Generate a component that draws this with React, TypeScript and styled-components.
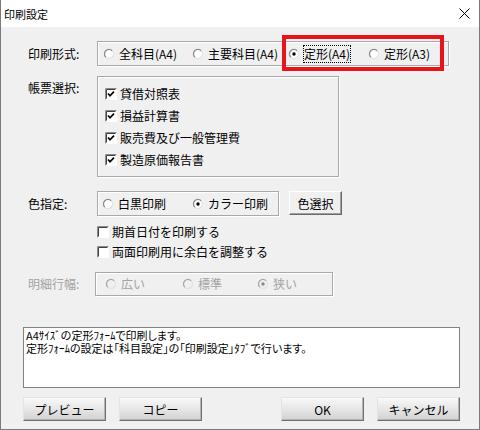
import React from "react";
import styled, { createGlobalStyle } from "styled-components";

const Global = createGlobalStyle`
  html, body { margin: 0; padding: 0; background: #f0f0f0; }
  * { box-sizing: border-box; }
`;

const FONT = `"Noto Sans CJK JP", "Noto Sans", "Liberation Sans", sans-serif`;

const Window = styled.div`
  width: 480px;
  height: 430px;
  background: #f0f0f0;
  border: 1px solid #7a7a7a;
  border-top: none;
  display: flex;
  flex-direction: column;
  font-family: ${FONT};
  font-size: 12px;
  color: #000;
  overflow: hidden;
`;

const TitleBar = styled.div`
  height: 27px;
  background: #fff;
  display: flex;
  align-items: center;
  justify-content: space-between;
  padding: 0 9px 0 3px;
  font-size: 11px;
  flex-shrink: 0;
`;

const Body = styled.div`
  padding: 0 19px 0 22px;
  display: flex;
  flex-direction: column;
`;

const Row = styled.div<{ $mt: number }>`
  display: grid;
  grid-template-columns: 74px auto;
  align-items: start;
  margin-top: ${(p) => p.$mt}px;
`;

const Label = styled.div<{ $h: number; $disabled?: boolean; $pt?: number }>`
  padding-left: 5px;
  height: ${(p) => p.$h}px;
  display: flex;
  align-items: ${(p) => (p.$pt !== undefined ? "flex-start" : "center")};
  padding-top: ${(p) => p.$pt ?? 0}px;
  line-height: 16px;
  color: ${(p) => (p.$disabled ? "#a3a3a3" : "#000")};
`;

const Group = styled.div<{ $w: number; $h: number; $pl: number; $ml?: number }>`
  position: relative;
  width: ${(p) => p.$w}px;
  height: ${(p) => p.$h}px;
  margin-left: ${(p) => p.$ml ?? 0}px;
  border: 1px solid #a9a9a9;
  box-shadow: inset 1px 1px 0 #fff, 1px 1px 0 #fff;
  display: flex;
  align-items: center;
  padding-left: ${(p) => p.$pl}px;
`;

const CheckGroup = styled.div`
  width: 242px;
  height: 101px;
  border: 1px solid #a9a9a9;
  box-shadow: inset 1px 1px 0 #fff, 1px 1px 0 #fff;
  display: flex;
  flex-direction: column;
  padding: 6px 0 0 7px;
`;

const Item = styled.label<{ $w?: number; $h?: number; $disabled?: boolean }>`
  display: flex;
  align-items: center;
  gap: 4px;
  width: ${(p) => (p.$w ? `${p.$w}px` : "auto")};
  height: ${(p) => (p.$h ? `${p.$h}px` : "auto")};
  flex-shrink: 0;
  white-space: nowrap;
  line-height: 16px;
  color: ${(p) => (p.$disabled ? "#a3a3a3" : "#000")};
`;

const CheckItem = styled(Item)`
  gap: 3px;
`;

const Focus = styled.span`
  outline: 1px dotted #000;
  outline-offset: 0px;
`;

const Highlight = styled.div`
  position: absolute;
  left: 184px;
  top: -7px;
  width: 162px;
  height: 36px;
  border: 4px solid #e8141b;
  pointer-events: none;
`;

const ColorLine = styled.div`
  display: flex;
  align-items: flex-start;
  gap: 10px;
`;

const SmallButton = styled.button`
  width: 53px;
  height: 24px;
  font-family: ${FONT};
  font-size: 12px;
  color: #000;
  padding: 0;
  background: #f0f0f0;
  border-top: 1px solid #fff;
  border-left: 1px solid #fff;
  border-right: 1px solid #6a6a6a;
  border-bottom: 1px solid #6a6a6a;
  box-shadow: inset -1px -1px 0 #a0a0a0;
`;

const Options = styled.div`
  display: flex;
  flex-direction: column;
  margin-top: 6px;
`;

const Message = styled.div`
  margin-top: 31px;
  height: 61px;
  background: #fff;
  border: 1px solid #828282;
  padding: 1px 2px 0;
  font-size: 11px;
  line-height: 13px;
  white-space: pre;
  font-feature-settings: "palt";
`;

const ButtonBar = styled.div`
  margin-top: 9px;
  display: flex;
  gap: 13px;
`;

const Spacer = styled.div`
  flex: 1;
`;

const PushButton = styled.button`
  width: 83px;
  height: 24px;
  padding: 0;
  font-family: ${FONT};
  font-size: 12px;
  color: #000;
  background: linear-gradient(#f9f9f9, #e6e6e6 50%, #d2d2d2);
  border-top: 1px solid #e4e4e4;
  border-left: 1px solid #e4e4e4;
  border-right: 1px solid #707070;
  border-bottom: 1px solid #707070;
  box-shadow: inset -1px -1px 0 #b4b4b4;
`;

const Radio = ({ checked, disabled }: { checked?: boolean; disabled?: boolean }) => (
  <svg width="12" height="12" viewBox="0 0 12 12" style={{ flexShrink: 0 }}>
    <circle cx="6" cy="6" r="4.5" fill={disabled ? "#f0f0f0" : "#fff"} />
    <path d="M9.2 2.8 A4.5 4.5 0 0 0 2.8 9.2" fill="none" stroke={disabled ? "#a8a8a8" : "#8a8a8a"} strokeWidth="1.3" />
    <path d="M2.8 9.2 A4.5 4.5 0 0 0 9.2 2.8" fill="none" stroke="#e3e3e3" strokeWidth="1.3" />
    {checked && <circle cx="6" cy="6" r="1.7" fill={disabled ? "#8a8a8a" : "#000"} />}
  </svg>
);

const Check = ({ checked }: { checked?: boolean }) => (
  <svg width="12" height="12" viewBox="0 0 12 12" style={{ flexShrink: 0 }}>
    <rect x="0.5" y="0.5" width="11" height="11" fill="#fff" stroke="#fff" />
    <path d="M0.5 11.5 V0.5 H11.5" fill="none" stroke="#8a8a8a" />
    <path d="M1.5 10.5 V1.5 H10.5" fill="none" stroke="#404040" />
    {checked && <path d="M3 5.5 L5 7.8 L9 3.6" fill="none" stroke="#000" strokeWidth="1.7" />}
  </svg>
);

const Close = () => (
  <svg width="11" height="11" viewBox="0 0 11 11">
    <path d="M0.5 0.5 L10.5 10.5 M10.5 0.5 L0.5 10.5" stroke="#000" strokeWidth="1" />
  </svg>
);

export default function App() {
  return (
    <>
      <Global />
      <Window>
        <TitleBar>
          <span>印刷設定</span>
          <Close />
        </TitleBar>
        <Body>
          <Row $mt={14}>
            <Label $h={25}>印刷形式:</Label>
            <Group $w={352} $h={25} $pl={5}>
              <Item $w={89}><Radio />全科目(A4)</Item>
              <Item $w={96}><Radio />主要科目(A4)</Item>
              <Item $w={80}><Radio checked /><Focus>定形(A4)</Focus></Item>
              <Item><Radio />定形(A3)</Item>
              <Highlight />
            </Group>
          </Row>

          <Row $mt={10}>
            <Label $h={24} $pt={4}>帳票選択:</Label>
            <CheckGroup>
              <CheckItem $h={22}><Check checked />貸借対照表</CheckItem>
              <CheckItem $h={22}><Check checked />損益計算書</CheckItem>
              <CheckItem $h={22}><Check checked />販売費及び一般管理費</CheckItem>
              <CheckItem $h={22}><Check checked />製造原価報告書</CheckItem>
            </CheckGroup>
          </Row>

          <Row $mt={14}>
            <Label $h={25}>色指定:</Label>
            <div>
              <ColorLine>
                <Group $w={182} $h={25} $pl={4}>
                  <Item $w={90}><Radio />白黒印刷</Item>
                  <Item><Radio checked />カラー印刷</Item>
                </Group>
                <SmallButton>色選択</SmallButton>
              </ColorLine>
              <Options>
                <CheckItem $h={20}><Check />期首日付を印刷する</CheckItem>
                <CheckItem $h={20}><Check />両面印刷用に余白を調整する</CheckItem>
              </Options>
            </div>
          </Row>

          <Row $mt={10}>
            <Label $h={24} $disabled>明細行幅:</Label>
            <Group $w={238} $h={24} $pl={9} $ml={-2}>
              <Item $w={77} $disabled><Radio disabled />広い</Item>
              <Item $w={75} $disabled><Radio disabled />標準</Item>
              <Item $disabled><Radio disabled checked />狭い</Item>
            </Group>
          </Row>

          <Message>{"A4ｻｲｽﾞの定形ﾌｫｰﾑで印刷します。\n定形ﾌｫｰﾑの設定は「科目設定」の「印刷設定」ﾀﾌﾞで行います。"}</Message>

          <ButtonBar>
            <PushButton>プレビュー</PushButton>
            <PushButton>コピー</PushButton>
            <Spacer />
            <PushButton>OK</PushButton>
            <PushButton>キャンセル</PushButton>
          </ButtonBar>
        </Body>
      </Window>
    </>
  );
}
